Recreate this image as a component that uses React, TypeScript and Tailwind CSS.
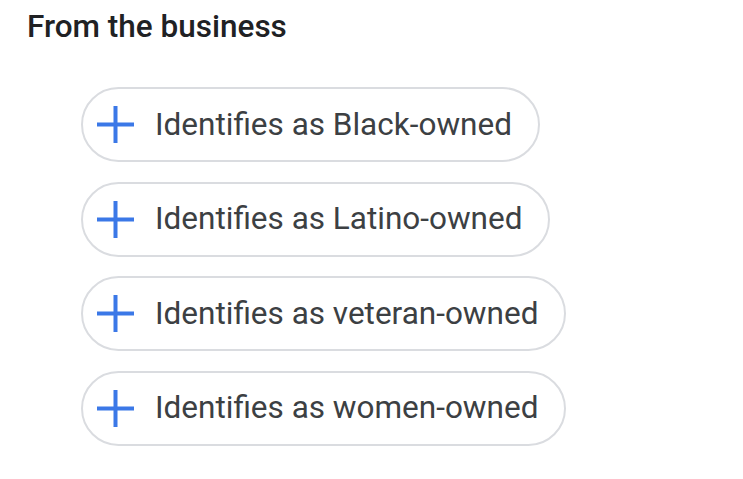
import React from "react";

const items = [
  "Identifies as Black-owned",
  "Identifies as Latino-owned",
  "Identifies as veteran-owned",
  "Identifies as women-owned",
];

function PlusIcon() {
  return (
    <svg width="37" height="37" viewBox="0 0 37 37" className="shrink-0">
      <path d="M18.5 0v37M0 18.5h37" stroke="#3b78e7" strokeWidth="4" fill="none" />
    </svg>
  );
}

export default function App() {
  return (
    <div
      className="w-[743px] h-[479px] bg-white pl-[27px] pt-[9px]"
      style={{ fontFamily: "Roboto, 'Liberation Sans', sans-serif" }}
    >
      <h2 className="text-[31.5px] leading-[36px] font-medium text-[#202124]">From the business</h2>
      <div className="mt-[42px] ml-[54px] flex flex-col items-start gap-[19.5px]">
        {items.map((t) => (
          <div
            key={t}
            className="h-[75px] flex items-center gap-[21px] pl-[14px] pr-[26px] rounded-full border-2 border-[#dadce0] text-[#3c4043] text-[31.5px]"
          >
            <PlusIcon />
            <span>{t}</span>
          </div>
        ))}
      </div>
    </div>
  );
}
